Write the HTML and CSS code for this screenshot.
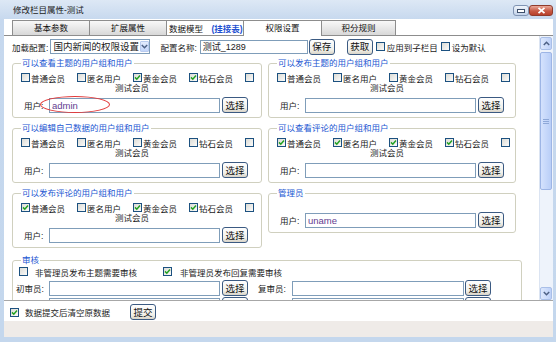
FILE: index.html
```html
<!DOCTYPE html>
<html lang="zh-CN">
<head>
    <meta charset="UTF-8">
    <title>修改栏目属性-测试</title>
    <link rel="stylesheet" href="styles.css">
</head>
<body>
    <div class="window">
        <div class="titlebar">
            <span class="title">修改栏目属性-测试</span>
            <div class="win-btns">
                <span class="win-btn win-min"><svg width="8" height="4" viewBox="0 0 8 4"><rect x="0.5" y="0.5" width="7" height="3" fill="#fff" stroke="#3c4f6b"/></svg></span>
                <span class="win-btn win-close"><svg width="9" height="7" viewBox="0 0 9 7"><path d="M1.5 0.8 L7.5 6.2 M7.5 0.8 L1.5 6.2" stroke="#fff" stroke-width="1.8"/></svg></span>
            </div>
        </div>

        <div class="client">
            <div class="tabs">
                <span class="tab">基本参数</span>
                <span class="tab">扩展属性</span>
                <span class="tab tab-model">数据模型 <b>(挂接表)</b></span>
                <span class="tab active">权限设置</span>
                <span class="tab">积分规则</span>
            </div>

            <div class="panel">
                <div class="content">
                    <!-- 配置 -->
                    <div class="toolbar">
                        <span>加载配置:</span>
                        <span class="select">
                            <span class="select-val">国内新闻的权限设置</span>
                            <span class="select-btn"><svg width="7" height="5" viewBox="0 0 7 5"><path d="M0.8 1 L3.5 3.7 L6.2 1" fill="none" stroke="#4d6185" stroke-width="1.5"/></svg></span>
                        </span>
                        <span class="tb-name">配置名称:</span>
                        <input class="text tb-input" type="text" value="测试_1289">
                        <button class="btn btn-save">保存</button>
                        <button class="btn btn-get">获取</button>
                        <label class="tb-check"><span class="cb"></span>应用到子栏目</label>
                        <label class="tb-check"><span class="cb"></span>设为默认</label>
                    </div>

                    <div class="groups">
                        <fieldset>
                            <legend>可以查看主题的用户组和用户</legend>
                            <div class="opts">
                                <label class="opt"><span class="cb"></span>普通会员</label>
                                <label class="opt"><span class="cb"></span>匿名用户</label>
                                <label class="opt"><span class="cb on"><svg width="7" height="7" viewBox="0 0 7 7"><path d="M1 3.4 L2.8 5.2 L6 1.6" fill="none" stroke="#21a121" stroke-width="1.5"/></svg></span>黄金会员</label>
                                <label class="opt"><span class="cb on"><svg width="7" height="7" viewBox="0 0 7 7"><path d="M1 3.4 L2.8 5.2 L6 1.6" fill="none" stroke="#21a121" stroke-width="1.5"/></svg></span>钻石会员</label>
                                <span class="cb"></span>
                            </div>
                            <div class="opts-more">测试会员</div>
                            <div class="user-row">
                                <span class="lbl">用户:</span>
                                <input class="text user" type="text" value="admin">
                                <button class="btn btn-pick">选择</button>
                                <span class="mark"></span>
                            </div>
                        </fieldset>

                        <fieldset>
                            <legend>可以发布主题的用户组和用户</legend>
                            <div class="opts">
                                <label class="opt"><span class="cb"></span>普通会员</label>
                                <label class="opt"><span class="cb"></span>匿名用户</label>
                                <label class="opt"><span class="cb"></span>黄金会员</label>
                                <label class="opt"><span class="cb"></span>钻石会员</label>
                                <span class="cb"></span>
                            </div>
                            <div class="opts-more">测试会员</div>
                            <div class="user-row">
                                <span class="lbl">用户:</span>
                                <input class="text" type="text" value="">
                                <button class="btn btn-pick">选择</button>
                            </div>
                        </fieldset>

                        <fieldset>
                            <legend>可以编辑自己数据的用户组和用户</legend>
                            <div class="opts">
                                <label class="opt"><span class="cb"></span>普通会员</label>
                                <label class="opt"><span class="cb"></span>匿名用户</label>
                                <label class="opt"><span class="cb"></span>黄金会员</label>
                                <label class="opt"><span class="cb"></span>钻石会员</label>
                                <span class="cb"></span>
                            </div>
                            <div class="opts-more">测试会员</div>
                            <div class="user-row">
                                <span class="lbl">用户:</span>
                                <input class="text" type="text" value="">
                                <button class="btn btn-pick">选择</button>
                            </div>
                        </fieldset>

                        <fieldset>
                            <legend>可以查看评论的用户组和用户</legend>
                            <div class="opts">
                                <label class="opt"><span class="cb on"><svg width="7" height="7" viewBox="0 0 7 7"><path d="M1 3.4 L2.8 5.2 L6 1.6" fill="none" stroke="#21a121" stroke-width="1.5"/></svg></span>普通会员</label>
                                <label class="opt"><span class="cb on"><svg width="7" height="7" viewBox="0 0 7 7"><path d="M1 3.4 L2.8 5.2 L6 1.6" fill="none" stroke="#21a121" stroke-width="1.5"/></svg></span>匿名用户</label>
                                <label class="opt"><span class="cb on"><svg width="7" height="7" viewBox="0 0 7 7"><path d="M1 3.4 L2.8 5.2 L6 1.6" fill="none" stroke="#21a121" stroke-width="1.5"/></svg></span>黄金会员</label>
                                <label class="opt"><span class="cb on"><svg width="7" height="7" viewBox="0 0 7 7"><path d="M1 3.4 L2.8 5.2 L6 1.6" fill="none" stroke="#21a121" stroke-width="1.5"/></svg></span>钻石会员</label>
                                <span class="cb"></span>
                            </div>
                            <div class="opts-more">测试会员</div>
                            <div class="user-row">
                                <span class="lbl">用户:</span>
                                <input class="text" type="text" value="">
                                <button class="btn btn-pick">选择</button>
                            </div>
                        </fieldset>

                        <fieldset>
                            <legend>可以发布评论的用户组和用户</legend>
                            <div class="opts">
                                <label class="opt"><span class="cb on"><svg width="7" height="7" viewBox="0 0 7 7"><path d="M1 3.4 L2.8 5.2 L6 1.6" fill="none" stroke="#21a121" stroke-width="1.5"/></svg></span>普通会员</label>
                                <label class="opt"><span class="cb"></span>匿名用户</label>
                                <label class="opt"><span class="cb on"><svg width="7" height="7" viewBox="0 0 7 7"><path d="M1 3.4 L2.8 5.2 L6 1.6" fill="none" stroke="#21a121" stroke-width="1.5"/></svg></span>黄金会员</label>
                                <label class="opt"><span class="cb on"><svg width="7" height="7" viewBox="0 0 7 7"><path d="M1 3.4 L2.8 5.2 L6 1.6" fill="none" stroke="#21a121" stroke-width="1.5"/></svg></span>钻石会员</label>
                                <span class="cb"></span>
                            </div>
                            <div class="opts-more">测试会员</div>
                            <div class="user-row">
                                <span class="lbl">用户:</span>
                                <input class="text" type="text" value="">
                                <button class="btn btn-pick">选择</button>
                            </div>
                        </fieldset>

                        <fieldset class="admin">
                            <legend>管理员</legend>
                            <div class="user-row">
                                <span class="lbl">用户:</span>
                                <input class="text user" type="text" value="uname">
                                <button class="btn btn-pick">选择</button>
                            </div>
                        </fieldset>
                    </div>

                    <!-- 审核 -->
                    <fieldset class="audit">
                        <legend>审核</legend>
                        <div class="audit-checks">
                            <label class="audit-opt"><span class="cb"></span>非管理员发布主题需要审核</label>
                            <label class="audit-opt"><span class="cb on"><svg width="7" height="7" viewBox="0 0 7 7"><path d="M1 3.4 L2.8 5.2 L6 1.6" fill="none" stroke="#21a121" stroke-width="1.5"/></svg></span>非管理员发布回复需要审核</label>
                        </div>
                        <div class="audit-row">
                            <span class="a-lbl">初审员:</span>
                            <input class="text a-input" type="text" value="">
                            <button class="btn a-btn">选择</button>
                            <span class="a-lbl a-lbl2">复审员:</span>
                            <input class="text a-input2" type="text" value="">
                            <button class="btn a-btn2">选择</button>
                        </div>
                        <div class="audit-row">
                            <span class="a-lbl">终审员:</span>
                            <input class="text a-input" type="text" value="">
                            <button class="btn a-btn">选择</button>
                            <span class="a-lbl a-lbl2">备审员:</span>
                            <input class="text a-input2" type="text" value="">
                            <button class="btn a-btn2">选择</button>
                        </div>
                    </fieldset>
                </div>

                <div class="scrollbar">
                    <span class="sb-btn"><svg width="7" height="5" viewBox="0 0 7 5"><path d="M0.8 4 L3.5 1.3 L6.2 4" fill="none" stroke="#4d6185" stroke-width="1.5"/></svg></span>
                    <div class="sb-track">
                        <div class="sb-thumb"><span class="grip"></span></div>
                    </div>
                    <span class="sb-btn"><svg width="7" height="5" viewBox="0 0 7 5"><path d="M0.8 1 L3.5 3.7 L6.2 1" fill="none" stroke="#4d6185" stroke-width="1.5"/></svg></span>
                </div>
            </div>

            <div class="footer">
                <label class="foot-check"><span class="cb on"><svg width="7" height="7" viewBox="0 0 7 7"><path d="M1 3.4 L2.8 5.2 L6 1.6" fill="none" stroke="#21a121" stroke-width="1.5"/></svg></span>数据提交后清空原数据</label>
                <button class="btn btn-submit">提交</button>
            </div>
            <div class="statusbar"></div>
        </div>
    </div>
</body>
</html>
```

FILE: styles.css
```css
* {
    box-sizing: border-box;
    margin: 0;
    padding: 0;
}

body {
    font-family: "Liberation Sans", "Noto Sans CJK SC", sans-serif;
    font-size: 8.5px;
    color: #1a1a1a;
    background: #c4d7ed;
    width: 556px;
    height: 342px;
    overflow: hidden;
}

.window {
    width: 556px;
    height: 342px;
    display: flex;
    flex-direction: column;
    padding: 0 3px 5px 4px;
    background: linear-gradient(#dde8f5, #c6d8ee 20px, #c4d7ed);
}

/* 标题栏 */
.titlebar {
    height: 19px;
    flex-shrink: 0;
    display: flex;
    justify-content: space-between;
    align-items: flex-start;
}

.title {
    margin: 5px 0 0 9px;
    line-height: 11px;
    color: #1b1b1b;
}

.win-btns {
    display: flex;
    margin-top: 5px;
}

.win-btn {
    height: 11px;
    display: flex;
    align-items: center;
    justify-content: center;
    border-radius: 3px;
}

.win-min {
    width: 16px;
    border: 1px solid #8094b3;
    background: linear-gradient(#f0f5fb, #c3d3ea);
}

.win-close {
    width: 24px;
    border: 1px solid #8f3b2c;
    background: linear-gradient(#eaa899, #c75a45 55%, #b8402c);
}

/* 主体 */
.client {
    flex: 1;
    min-height: 0;
    display: flex;
    flex-direction: column;
    background: #fff;
}

.tabs {
    height: 17px;
    flex-shrink: 0;
    display: flex;
    align-items: flex-end;
    padding-left: 8px;
    border-bottom: 1px solid #8d8d8d;
}

.tab {
    width: 78px;
    height: 15px;
    margin-right: -1px;
    border: 1px solid #8d8d8d;
    border-bottom: 0;
    background: linear-gradient(#f8f8f8, #d8d8d8);
    text-align: center;
    line-height: 15px;
    color: #111;
}

.tab-model {
    background: #fff;
    text-align: left;
    padding-left: 2px;
    line-height: 17px;
}

.tab-model b {
    color: #1d4fd0;
    font-weight: bold;
    margin-left: 6px;
}

.tab.active {
    width: 79px;
    height: 16px;
    margin-bottom: -1px;
    background: #fff;
    position: relative;
    line-height: 14px;
}

.tab:last-child {
    width: 75px;
}

.panel {
    flex: 1;
    min-height: 0;
    display: flex;
}

.content {
    flex: 1;
    overflow: hidden;
    padding: 2px 0 0 8px;
}

/* 配置行 */
.toolbar {
    height: 17px;
    display: flex;
    align-items: center;
}

.select {
    width: 100px;
    height: 15px;
    margin-left: 2px;
    display: flex;
    border: 1px solid #7f9db9;
}

.select-val {
    flex: 1;
    font-size: 9.5px;
    line-height: 13px;
    padding-left: 2px;
    white-space: nowrap;
}

.select-btn {
    width: 12px;
    margin: 1px;
    display: flex;
    align-items: center;
    justify-content: center;
    border: 1px solid #b9cbef;
    border-radius: 1px;
    background: linear-gradient(#e3ecfd, #c3d5fa);
}

.tb-name {
    margin-left: 10px;
}

.text {
    height: 15px;
    border: 1px solid #7f9db9;
    padding: 0 2px;
    font-family: "Liberation Sans", "Noto Sans CJK SC", sans-serif;
    font-size: 9px;
    color: #1a1a1a;
    background: #fff;
    outline: none;
}

.tb-input {
    width: 108px;
    height: 14px;
    margin-left: 3px;
}

.btn {
    width: 26px;
    height: 16px;
    border: 1px solid #3b5a82;
    border-radius: 3px;
    background: linear-gradient(#fefefe, #f1f0ea 70%, #d9d4c8);
    font-family: "Liberation Sans", "Noto Sans CJK SC", sans-serif;
    font-size: 9.5px;
    line-height: 13px;
    color: #111;
    padding: 0;
}

.btn-save {
    margin-left: 1px;
}

.btn-get {
    margin-left: 12px;
}

.tb-check {
    display: flex;
    align-items: center;
    margin-left: 3px;
}

.tb-check .cb {
    margin-right: 2px;
}

/* 复选框 */
.cb {
    display: inline-flex;
    align-items: center;
    justify-content: center;
    width: 9px;
    height: 9px;
    flex-shrink: 0;
    border: 1px solid #1c5180;
    background: linear-gradient(135deg, #dcdcd6, #fbfbfa);
    vertical-align: middle;
}

/* 用户组 */
.groups {
    display: grid;
    grid-template-columns: 250px 248px;
    column-gap: 6px;
    row-gap: 5px;
    margin-top: 3px;
}

fieldset {
    min-width: 0;
    border: 1px solid #d0d0bf;
    border-radius: 3px;
    padding: 4px 6px 4px 8px;
}

legend {
    padding: 0 1px;
    line-height: 10px;
    color: #2357d2;
}

.opts {
    display: flex;
    align-items: center;
    height: 11px;
}

.opt {
    display: flex;
    align-items: center;
    margin-right: 12px;
    white-space: nowrap;
}

.opt .cb {
    margin-right: 1px;
}

.opts-more {
    height: 11px;
    line-height: 11px;
    text-align: center;
    padding-right: 12px;
}

.user-row {
    position: relative;
    display: flex;
    align-items: center;
    margin-top: 3px;
    padding-left: 3px;
}

.lbl {
    width: 25px;
}

.user-row .text {
    width: 171px;
}

.user {
    color: #633c8f;
    font-size: 9.5px;
}

.btn-pick {
    margin-left: 2px;
}

.mark {
    position: absolute;
    left: 19px;
    top: -1px;
    width: 70px;
    height: 17px;
    border: 1px solid #e23b3b;
    border-radius: 50%;
}

.admin {
    align-self: start;
}

.admin .user-row {
    margin-top: 10px;
}

/* 审核 */
.audit {
    width: 510px;
    margin-top: 7px;
    padding: 1px 6px 0 3px;
}

.audit legend {
    margin-left: 5px;
}

.audit-checks {
    height: 11px;
    display: flex;
    align-items: center;
    padding-left: 3px;
}

.audit-opt {
    display: flex;
    align-items: center;
    white-space: nowrap;
}

.audit-opt .cb {
    margin-right: 7px;
}

.audit-opt + .audit-opt {
    margin-left: 26px;
}

.audit-opt + .audit-opt .cb {
    margin-right: 8px;
}

.audit-row {
    display: flex;
    align-items: center;
    margin-top: 3px;
}

.audit-row + .audit-row {
    margin-top: 1px;
}

.a-lbl {
    width: 33px;
    white-space: nowrap;
}

.a-input {
    width: 171px;
}

.a-btn {
    margin-left: 2px;
}

.a-lbl2 {
    width: 34px;
    margin-left: 10px;
}

.a-input2 {
    width: 172px;
}

.a-btn2 {
    margin-left: 1px;
}

/* 滚动条 */
.scrollbar {
    width: 14px;
    flex-shrink: 0;
    display: flex;
    flex-direction: column;
    background: #eef3fb;
    border-left: 1px solid #dbe4f2;
    padding: 1px 1px 0 0;
}

.sb-btn {
    height: 13px;
    flex-shrink: 0;
    display: flex;
    align-items: center;
    justify-content: center;
    border: 1px solid #a9bfe8;
    border-radius: 2px;
    background: linear-gradient(to right, #dde8fd, #bed1f8);
}

.sb-track {
    flex: 1;
    padding-top: 2px;
}

.sb-thumb {
    height: 138px;
    display: flex;
    align-items: center;
    justify-content: center;
    border: 1px solid #9db5e5;
    border-radius: 2px;
    background: linear-gradient(to right, #d4e2fd, #b9cef7);
}

.grip {
    width: 6px;
    height: 5px;
    border-top: 1px solid #8ea8d8;
    border-bottom: 1px solid #8ea8d8;
    background: linear-gradient(#8ea8d8, #8ea8d8) center / 6px 1px no-repeat;
}

/* 底部 */
.footer {
    height: 21px;
    flex-shrink: 0;
    display: flex;
    align-items: center;
    padding: 2px 0 0 6px;
    border-top: 1px solid #a7a7a7;
}

.foot-check {
    display: flex;
    align-items: center;
}

.foot-check .cb {
    margin-right: 6px;
}

.btn-submit {
    margin-left: 20px;
}

.statusbar {
    height: 16px;
    flex-shrink: 0;
    background: #efebe8;
}
```
